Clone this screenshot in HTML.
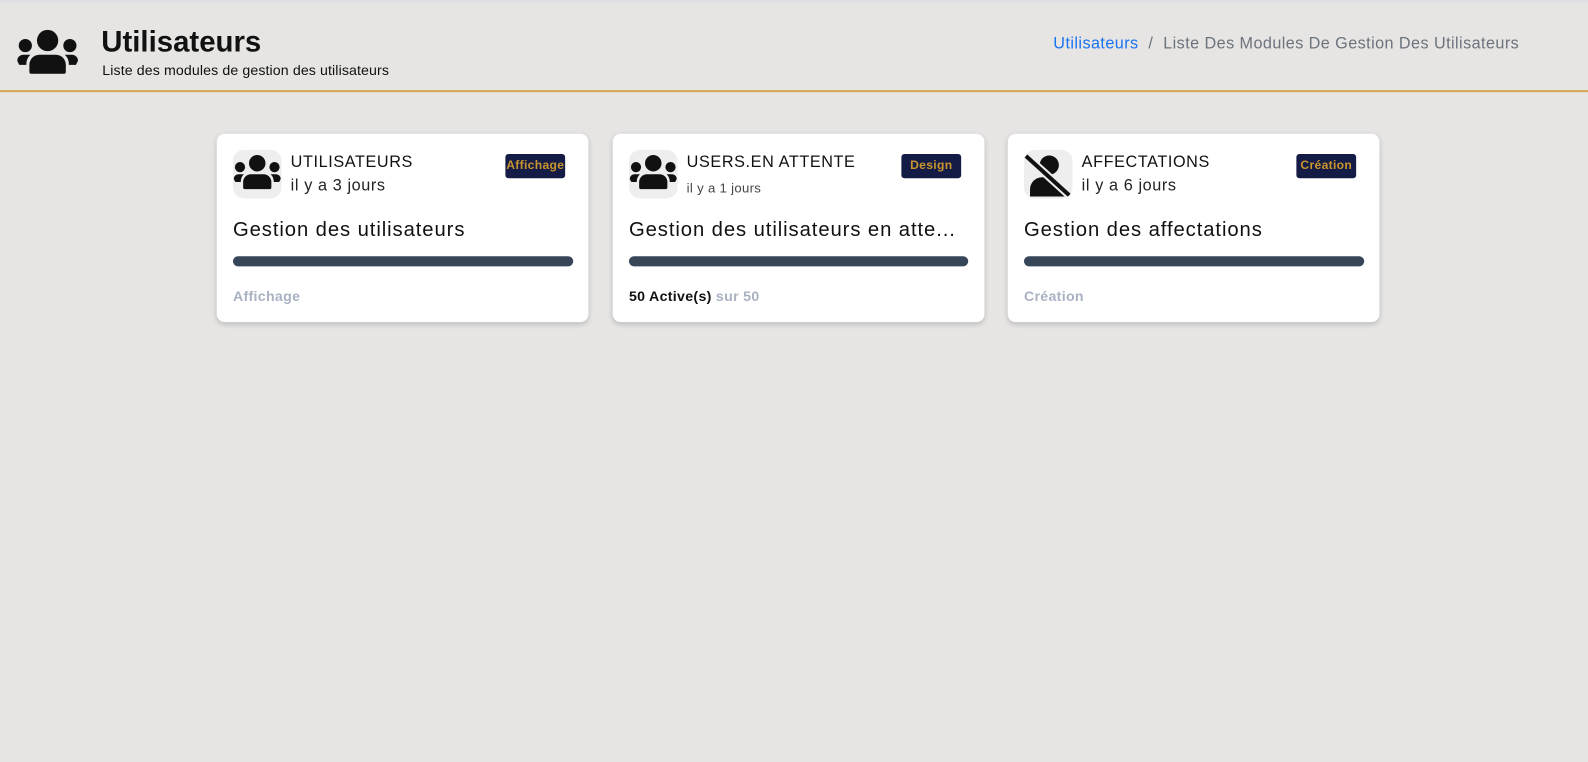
<!DOCTYPE html>
<html><head><meta charset="utf-8"><style>
*{box-sizing:border-box;margin:0;padding:0}
body{width:1588px;height:762px;background:#e6e5e4;font-family:"Liberation Sans",sans-serif;overflow:hidden;color:#111}
#w{position:relative;width:1568px;height:752px;transform:scale(1.0128);transform-origin:0 0}
.top{position:absolute;left:0;top:0;width:1588px;height:3px;background:#e0e0e3}
.hdr{position:absolute;left:0;top:3px;width:1588px;height:88px;background:#e6e5e3;border-bottom:2px solid #d4a753}
.hdr h1{position:absolute;left:100px;top:23px;font-size:29px;font-weight:bold;letter-spacing:0}
.hdr .sub{position:absolute;left:101px;top:58px;font-size:14px;letter-spacing:.1px}
.bc{position:absolute;left:1040px;top:32px;font-size:16px;color:#6c737d;letter-spacing:.42px}
.bc a{color:#1a73f0;text-decoration:none}
.card{position:absolute;top:132px;width:367px;height:186px;background:#fff;border-radius:8px;box-shadow:0 2px 5px rgba(0,0,0,.18)}
.ic{position:absolute;left:16px;top:16px;width:48px;height:48px;background:#eee;border-radius:11px;overflow:hidden}
.t{position:absolute;left:73px;top:20px;font-size:16px;letter-spacing:.6px}
.d{position:absolute;left:73px;top:43px;font-size:16px;color:#222;letter-spacing:.6px}
.d.s{font-size:13px;top:46px;color:#444;letter-spacing:.3px}
.b{position:absolute;top:20px;height:24px;background:#141c45;color:#c9952e;font-size:12px;font-weight:bold;border-radius:3px;text-align:center;line-height:22px;letter-spacing:.3px}
.h{position:absolute;left:16px;top:84px;font-size:20px;letter-spacing:.9px}
.bar{position:absolute;left:16px;top:121px;width:336px;height:10px;background:#374559;border-radius:5px}
.f{position:absolute;left:16px;top:152px;font-size:14px;font-weight:bold;color:#a9b1c2;letter-spacing:.3px}
</style></head><body><div id="w">
<div class="top"></div>
<div class="hdr">
<svg style="position:absolute;left:17px;top:26px" width="60" height="44" viewBox="0 0 60 44"><circle cx="30" cy="11" r="10.5" fill="#111"/><circle cx="8" cy="16" r="6.5" fill="#111"/><circle cx="52" cy="16" r="6.5" fill="#111"/><path d="M12 42 V35 a10 10 0 0 1 10 -10 h16 a10 10 0 0 1 10 10 V42 a2 2 0 0 1-2 2 H14 a2 2 0 0 1-2-2 z" fill="#111"/><path d="M0 31 a6 6 0 0 1 6-6 h7 a13 13 0 0 0-4 10 H2 z M60 31 a6 6 0 0 0-6-6 h-7 a13 13 0 0 1 4 10 h7 z" fill="#111"/></svg>
<h1>Utilisateurs</h1><div class="sub">Liste des modules de gestion des utilisateurs</div>
<div class="bc"><a>Utilisateurs</a>&nbsp; / &nbsp;Liste Des Modules De Gestion Des Utilisateurs</div>
</div>

<div class="card" style="left:214px">
<div class="ic"><svg width="48" height="48" viewBox="-1 -6 62 62"><circle cx="30" cy="11" r="10.5" fill="#111"/><circle cx="8" cy="16" r="6.5" fill="#111"/><circle cx="52" cy="16" r="6.5" fill="#111"/><path d="M12 42 V35 a10 10 0 0 1 10 -10 h16 a10 10 0 0 1 10 10 V42 a2 2 0 0 1-2 2 H14 a2 2 0 0 1-2-2 z" fill="#111"/><path d="M0 31 a6 6 0 0 1 6-6 h7 a13 13 0 0 0-4 10 H2 z M60 31 a6 6 0 0 0-6-6 h-7 a13 13 0 0 1 4 10 h7 z" fill="#111"/></svg></div>
<div class="t">UTILISATEURS</div><div class="d">il y a 3 jours</div>
<div class="b" style="left:285px;width:59px">Affichage</div>
<div class="h">Gestion des utilisateurs</div><div class="bar"></div>
<div class="f">Affichage</div>
</div>

<div class="card" style="left:605px">
<div class="ic"><svg width="48" height="48" viewBox="-1 -6 62 62"><circle cx="30" cy="11" r="10.5" fill="#111"/><circle cx="8" cy="16" r="6.5" fill="#111"/><circle cx="52" cy="16" r="6.5" fill="#111"/><path d="M12 42 V35 a10 10 0 0 1 10 -10 h16 a10 10 0 0 1 10 10 V42 a2 2 0 0 1-2 2 H14 a2 2 0 0 1-2-2 z" fill="#111"/><path d="M0 31 a6 6 0 0 1 6-6 h7 a13 13 0 0 0-4 10 H2 z M60 31 a6 6 0 0 0-6-6 h-7 a13 13 0 0 1 4 10 h7 z" fill="#111"/></svg></div>
<div class="t">USERS.EN ATTENTE</div><div class="d s">il y a 1 jours</div>
<div class="b" style="left:285px;width:59px">Design</div>
<div class="h">Gestion des utilisateurs en atte...</div><div class="bar" style="width:335px"></div>
<div class="f"><span style="color:#111">50 Active(s)</span> sur 50</div>
</div>

<div class="card" style="left:995px">
<div class="ic"><svg width="48" height="48" viewBox="0 0 48 48"><circle cx="25" cy="15" r="9.5" fill="#111"/><path d="M6 46 V39 a12 12 0 0 1 12 -12 h12 l14 14 V46 z" fill="#111"/><line x1="2" y1="6" x2="45" y2="45" stroke="#eee" stroke-width="8"/><line x1="2" y1="6" x2="45" y2="45" stroke="#111" stroke-width="4"/></svg></div>
<div class="t">AFFECTATIONS</div><div class="d">il y a 6 jours</div>
<div class="b" style="left:285px;width:59px">Création</div>
<div class="h">Gestion des affectations</div><div class="bar"></div>
<div class="f">Création</div>
</div>
</div></body></html>
